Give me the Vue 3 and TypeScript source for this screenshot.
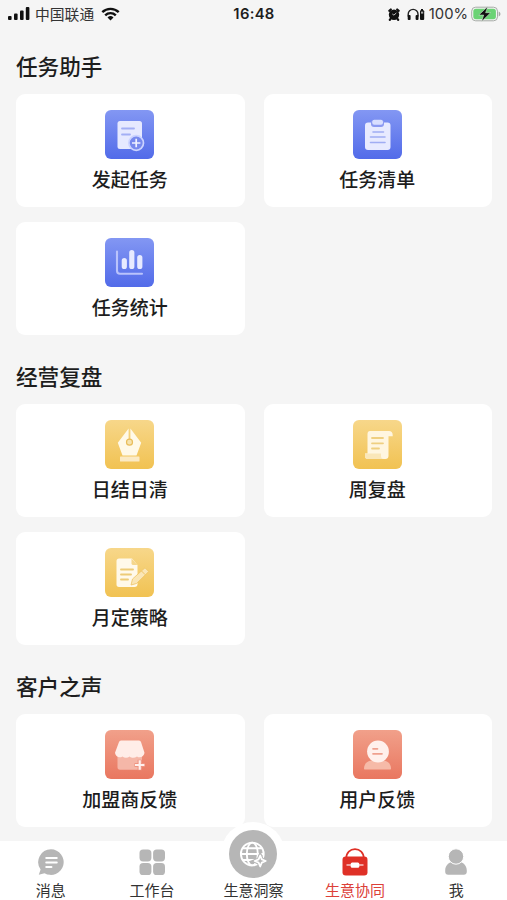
<script setup lang="ts">
type IconName = 'create' | 'list' | 'stats' | 'pen' | 'scroll' | 'plan' | 'shop' | 'user'

interface Entry {
  label: string
  icon: IconName
}

interface Section {
  title: string
  tone: 'blue' | 'yellow' | 'red'
  entries: Entry[]
}

const sections: Section[] = [
  {
    title: '任务助手',
    tone: 'blue',
    entries: [
      { label: '发起任务', icon: 'create' },
      { label: '任务清单', icon: 'list' },
      { label: '任务统计', icon: 'stats' },
    ],
  },
  {
    title: '经营复盘',
    tone: 'yellow',
    entries: [
      { label: '日结日清', icon: 'pen' },
      { label: '周复盘', icon: 'scroll' },
      { label: '月定策略', icon: 'plan' },
    ],
  },
  {
    title: '客户之声',
    tone: 'red',
    entries: [
      { label: '加盟商反馈', icon: 'shop' },
      { label: '用户反馈', icon: 'user' },
    ],
  },
]

const tabs = [
  { key: 'message', label: '消息' },
  { key: 'work', label: '工作台' },
  { key: 'insight', label: '生意洞察' },
  { key: 'team', label: '生意协同' },
  { key: 'me', label: '我' },
]
const active = 'team'
</script>

<template>
  <div class="screen">
    <header class="status">
      <div class="carrier">
        <svg class="signal" width="22" height="14" viewBox="0 0 22 14">
          <rect x="0" y="9" width="3.6" height="4" rx="1" />
          <rect x="6" y="6.5" width="3.6" height="6.5" rx="1" />
          <rect x="12" y="3.5" width="3.6" height="9.5" rx="1" />
          <rect x="17.8" y="0" width="3.6" height="13" rx="1" />
        </svg>
        <span class="carrier-name">中国联通</span>
        <svg class="wifi" width="19" height="14" viewBox="0 0 19 14">
          <path d="M1.3 5.2a11.8 11.8 0 0 1 16.4 0" />
          <path d="M4.2 8.3a7.6 7.6 0 0 1 10.6 0" />
          <path class="dot" d="M9.5 13.5 6.5 10.5a4.3 4.3 0 0 1 6 0z" />
        </svg>
      </div>
      <span class="clock">16:48</span>
      <div class="power">
        <svg width="12" height="13" viewBox="0 0 12 13">
          <circle cx="6" cy="6.7" r="5.2" />
          <path d="M1.300 2.800 2.800 1.500M10.700 2.800 9.200 1.500M2.500 10.800 1.800 11.800M9.500 10.800l.7 1" stroke="#111" stroke-width="2.200" stroke-linecap="round" />
          <path d="M5.900 7.100 8.300 5M5.900 7.100 4.300 6" stroke="#d5d5d5" stroke-width=".9" fill="none" />
        </svg>
        <svg class="headset" width="19" height="13" viewBox="0 0 19 13">
          <path d="M1.200 8.500V6.300a4.900 4.900 0 0 1 9.800 0v2.200" fill="none" stroke="#222" stroke-width="1.400" />
          <rect x=".7" y="7" width="2.900" height="4.900" rx="1" />
          <rect x="8.600" y="7" width="2.900" height="4.900" rx="1" />
          <rect x="14" y="1" width="2" height="2" />
          <rect x="13" y="2.200" width="4.200" height="9.800" rx="1" />
          <rect x="14" y="3.600" width="2.200" height="2" fill="#aaa" />
        </svg>
        <span class="percent">100%</span>
        <svg class="battery" width="31" height="16" viewBox="0 0 31 16">
          <rect x=".7" y="1.200" width="25.800" height="13.600" rx="4" fill="#f5f5f5" stroke="#a5aaa5" stroke-width="1" />
          <rect x="2.300" y="2.800" width="22.600" height="10.400" rx="2.600" fill="#6bd375" />
          <path d="M27.700 5.500c2.300.7 2.300 4.300 0 5z" fill="#a5aaa5" />
          <path d="M16.800.5 7.800 9h4.900l-2.100 6.600 9-8.900h-5z" fill="#111" stroke="#e6f5e7" stroke-width=".5" />
        </svg>
      </div>
    </header>

    <main class="content">
      <section v-for="section in sections" :key="section.title" class="section">
        <h2 class="title">{{ section.title }}</h2>
        <div class="grid">
          <div v-for="entry in section.entries" :key="entry.label" class="card">
            <div class="tile" :class="section.tone">
              <svg v-if="entry.icon === 'create'" viewBox="0 0 49 49">
                <rect x="12.500" y="11" width="24.500" height="28" rx="2.500" fill="#e6e9ff" />
                <path d="M17 18.500h12M17 24.500h8" stroke="#a3aff5" stroke-width="1.800" stroke-linecap="round" />
                <circle cx="31.200" cy="33" r="7.300" fill="#7789ee" stroke="#cbd3ff" stroke-width="1.700" />
                <path d="M31.200 28.800v8.400M27 33h8.400" stroke="#eef0ff" stroke-width="1.700" />
              </svg>
              <svg v-else-if="entry.icon === 'list'" viewBox="0 0 49 49">
                <rect x="12" y="12.500" width="25.500" height="27.500" rx="3" fill="#e7eaff" />
                <path d="M18 11h13v3a3 3 0 0 1-3 3h-7a3 3 0 0 1-3-3z" fill="#8c9af2" />
                <rect x="19.200" y="9.800" width="10.800" height="5" rx="2" fill="#d8deff" />
                <path d="M20 22h10.500M17.500 27h14.500M17.500 32.500h14.500" stroke="#a0adf3" stroke-width="1.600" stroke-linecap="round" />
              </svg>
              <svg v-else-if="entry.icon === 'stats'" viewBox="0 0 49 49">
                <path d="M12 13.500v19.200q0 3 3 3h22" fill="none" stroke="#b9c3fc" stroke-width="2.100" stroke-linecap="round" />
                <path d="M19.300 22.500v6M26.800 14.500v14M34.800 19.500v9" stroke="#e7eaff" stroke-width="5.200" stroke-linecap="round" />
              </svg>
              <svg v-else-if="entry.icon === 'pen'" viewBox="0 0 49 49">
                <path d="M23.600 8.500v13.700h1.800V8.500l10.800 14.200-4.700 12.800h-14l-4.700-12.800z" fill="#fff9e8" />
                <circle cx="24.500" cy="22.200" r="3" fill="#f6e3ae" stroke="#e9bd5b" stroke-width="1.200" />
                <rect x="15" y="36.500" width="19.500" height="5" rx=".6" fill="#fbeac4" />
              </svg>
              <svg v-else-if="entry.icon === 'scroll'" viewBox="0 0 49 49">
                <path d="M17 11h19c2.200 0 3.700 1.500 3.700 4v1.300h-4.200V36c0 2-1.300 3-3 3H15c-2 0-3-1-3-3v-2.500h2.500V14c0-2 1-3 2.500-3z" fill="#fff6e0" />
                <path d="M12 33.500h16V36c0 2 1 3 3 3H15c-2 0-3-1-3-3z" fill="#fae7b9" />
                <path d="M19 18h11M19 23.300h11M19 28.500h7" stroke="#efcf80" stroke-width="1.800" stroke-linecap="round" />
              </svg>
              <svg v-else-if="entry.icon === 'plan'" viewBox="0 0 49 49">
                <path d="M14 10.500h13l5.500 6.500v19c0 2-1 3-3 3H14c-1.700 0-2.500-1-2.500-2.500V13c0-1.500 1-2.500 2.500-2.500z" fill="#fff9ea" />
                <path d="M26.500 10.500v5q0 1.500 2 1.500h4z" fill="#f5d68b" />
                <path d="M16 21.500h12M16 26.500h10M16 31.500h7" stroke="#edcb77" stroke-width="1.900" stroke-linecap="round" />
                <path d="m26 37 1.500-6L40 19.800l3.700 3.700L31.500 35.500z" fill="#fae6b6" stroke="#efc465" stroke-width=".8" />
                <path d="m36.500 23 3.700 3.700" stroke="#efc465" stroke-width="1" />
              </svg>
              <svg v-else-if="entry.icon === 'shop'" viewBox="0 0 49 49">
                <path d="M12.500 25h24.500v12c0 1.700-1 2.700-2.700 2.700H15c-1.700 0-2.500-1-2.500-2.500z" fill="#f5b7a8" />
                <path d="M16 10.500h18q1.500 0 2 1.500l3.500 10.800c-.3 3.700-4.500 5.700-7.500 3.600-2.500 2-5.200 1.900-7.300 0-2.300 1.900-5 2-7.300 0-3 2.100-7.100.1-7.400-3.600L14 12q.5-1.500 2-1.500z" fill="#ffede8" />
                <path d="M34.700 29.800v10.400M29.500 35h10.400" stroke="#ee9380" stroke-width="4.200" />
                <path d="M34.700 30.300v9.400M30 35h9.400" stroke="#fff0ed" stroke-width="2.200" />
              </svg>
              <svg v-else viewBox="0 0 49 49">
                <path d="M11 38.500c0-4.500 3.500-8 8-8h11c4.500 0 8 3.500 8 8 0 .7-.5 1-1 1H12c-.6 0-1-.4-1-1z" fill="#f6baa8" />
                <circle cx="25" cy="21.500" r="10.900" fill="#fff0ec" />
                <path d="M20 18.800h4.500M20 23.800h9" stroke="#efa08e" stroke-width="1.700" stroke-linecap="round" />
              </svg>
            </div>
            <span class="label">{{ entry.label }}</span>
          </div>
        </div>
      </section>
    </main>

    <nav class="tabs">
      <a v-for="tab in tabs" :key="tab.key" class="tab" :class="{ active: tab.key === active }">
        <svg v-if="tab.key === 'message'" class="tab-icon" viewBox="0 0 28 28">
          <path d="M14 1.300a12.800 12.800 0 1 1-6.500 23.900L1.800 26.800 3.600 21.500A12.800 12.800 0 0 1 14 1.300z" />
          <path d="M9.200 10h10.600M9.200 14.500h10.600M9.200 19h5.300" stroke="#fff" stroke-width="1.900" stroke-linecap="round" />
        </svg>
        <svg v-else-if="tab.key === 'work'" class="tab-icon" viewBox="0 0 28 28">
          <rect x="1.500" y="1.500" width="11.900" height="11.900" rx="3.600" />
          <rect x="15.100" y="1.500" width="11.900" height="11.900" rx="3.600" />
          <rect x="1.500" y="15.100" width="11.900" height="11.900" rx="3.600" />
          <rect x="15.100" y="15.100" width="11.900" height="11.900" rx="3.600" />
        </svg>
        <span v-else-if="tab.key === 'insight'" class="bubble">
          <svg viewBox="0 0 48 48">
            <circle cx="24" cy="24" r="24" />
            <g fill="none" stroke="#fff" stroke-width="1.900">
              <circle cx="23.300" cy="24" r="11.400" />
              <ellipse cx="23.300" cy="24" rx="5.500" ry="11.400" />
              <path d="M13.500 18.300h19.600M11.900 24h22.800M13.500 30h16" />
            </g>
            <path d="m31.200 24.500 1.900 4.600 4.600 1.900-4.600 1.900-1.900 4.600-1.900-4.600-4.600-1.900 4.600-1.900z" fill="#b6b6b6" stroke="#b6b6b6" stroke-width="3" />
            <path d="m31.200 25.500 1.600 3.900 3.900 1.600-3.900 1.600-1.600 3.900-1.600-3.900-3.900-1.600 3.900-1.600z" fill="#b6b6b6" stroke="#fff" stroke-width="1.800" stroke-linejoin="round" />
          </svg>
        </span>
        <svg v-else-if="tab.key === 'team'" class="tab-icon" viewBox="0 0 28 28">
          <path d="M5.200 10.500C5.200 4.600 9.200 1.200 14 1.200s8.800 3.400 8.800 9.300" fill="none" stroke="#df3026" stroke-width="1.700" />
          <rect x="1.500" y="8.500" width="25" height="19" rx="3.300" />
          <path d="M5.500 17h17" stroke="#fff" stroke-width="1.100" />
          <rect x="9.700" y="14.500" width="8.600" height="5.200" rx="1.500" fill="#fff" />
        </svg>
        <svg v-else class="tab-icon" viewBox="0 0 28 28">
          <path d="M3.200 22.500c0-5.700 4.200-9 10.800-9s10.800 3.300 10.800 9v1.300c0 2-1.200 3-3 3H6.200c-1.800 0-3-1-3-3z" />
          <circle cx="14" cy="8.500" r="7.700" stroke="#fff" stroke-width="1" />
        </svg>
        <span class="tab-label">{{ tab.label }}</span>
      </a>
    </nav>
  </div>
</template>

<style>
body {
  background: #f5f5f5;
}
</style>

<style scoped>
.screen {
  display: flex;
  flex-direction: column;
  height: 900px;
  box-sizing: border-box;
  overflow: hidden;
  background: #f5f5f5;
  color: #1d1d1d;
  font-family: "Noto Sans CJK SC", sans-serif;
}

svg {
  display: block;
  flex: none;
}

.status {
  display: grid;
  grid-template-columns: 1fr auto 1fr;
  align-items: center;
  flex: none;
  height: 27px;
  padding: 0 5px 0 8px;
  font-size: 15px;
  line-height: 27px;
  fill: #111;
}

.carrier,
.power {
  display: flex;
  align-items: center;
}

.carrier-name {
  margin: -1px 7px 0 5px;
  font-size: 14.8px;
  color: #333;
}

.wifi path {
  fill: none;
  stroke: #111;
  stroke-width: 2.4;
}

.wifi .dot {
  fill: #111;
  stroke: none;
}

.clock {
  padding: 1px 2px 0 0;
  font-family: Inter, sans-serif;
  font-size: 14.8px;
  font-weight: 600;
  letter-spacing: 0.3px;
}

.power {
  justify-content: flex-end;
}

.headset {
  margin-left: 7px;
}

.percent {
  margin: 1px 3px 0 3px;
  font-family: Inter, sans-serif;
  font-size: 14.8px;
  color: #333;
}

.content {
  display: flex;
  flex-direction: column;
  flex: 1;
  gap: 26px;
  min-height: 0;
  padding: 24px 15px 0 16px;
}

.title {
  height: 30px;
  margin: 0 0 13px;
  font-size: 21.6px;
  font-weight: 500;
  line-height: 30px;
}

.grid {
  display: grid;
  grid-template-columns: 1fr 1fr;
  gap: 15px 19px;
}

.card {
  display: flex;
  flex-direction: column;
  align-items: center;
  box-sizing: border-box;
  height: 113px;
  padding: 15.5px 1px 0 0;
  border-radius: 9px;
  background: #fff;
}

.tile {
  width: 49px;
  height: 49px;
  border-radius: 6px;
}

.blue {
  background: linear-gradient(180deg, #8397f3, #526be9);
}

.yellow {
  background: linear-gradient(180deg, #f7d78a, #f1c252);
}

.red {
  background: linear-gradient(180deg, #f1a08a, #e97760);
}

.label {
  margin-top: 6.5px;
  font-size: 19px;
  font-weight: 500;
  line-height: 28px;
}

.tabs {
  display: grid;
  grid-template-columns: repeat(5, 1fr);
  flex: none;
  height: 59px;
  background: #fff;
}

.tab {
  position: relative;
  display: flex;
  flex-direction: column;
  align-items: center;
  justify-content: flex-end;
  color: #333;
  fill: #b6b6b6;
}

.tab-icon {
  width: 28px;
  height: 28px;
}

.tab-label {
  z-index: 1;
  height: 24px;
  font-size: 15px;
  line-height: 27px;
}

.active {
  color: #dc4039;
  fill: #df3026;
}

.bubble {
  position: absolute;
  top: -19px;
  left: 50%;
  width: 48px;
  height: 48px;
  padding: 8px;
  border-radius: 50%;
  background: #fff;
  transform: translateX(-50%);
}
</style>
